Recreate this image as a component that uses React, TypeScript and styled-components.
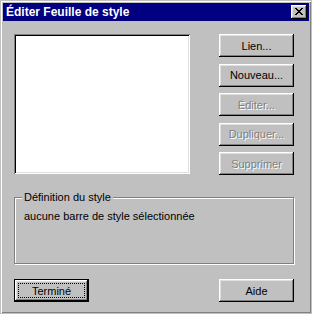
import styled, { createGlobalStyle, css } from 'styled-components';

const GlobalStyle = createGlobalStyle`
    html, body {
        margin: 0;
        padding: 0;
        background: #c0c0c0;
    }
    * {
        box-sizing: border-box;
    }
`

const Window = styled.div`
    width: 312px;
    height: 314px;
    display: flex;
    flex-direction: column;
    background: #c0c0c0;
    border: 1px solid #c0c0c0;
    padding: 2px;
    box-shadow: inset 1px 1px 0 #ffffff, inset -1px -1px 0 #808080;
    font-family: "Liberation Sans", Arial, sans-serif;
    font-size: 11px;
    color: #000;
`

const TitleBar = styled.div`
    height: 18px;
    display: flex;
    align-items: center;
    justify-content: space-between;
    background: #000080;
    padding: 0 2px 0 3px;
`

const Title = styled.span`
    color: #ffffff;
    font-weight: bold;
    font-size: 12px;
    line-height: 18px;
`

const CloseButton = styled.div`
    width: 16px;
    height: 14px;
    display: flex;
    align-items: center;
    justify-content: center;
    padding: 0 1px 1px 0;
    background: #c0c0c0;
    box-shadow: inset -1px -1px 0 #000, inset 1px 1px 0 #fff, inset -2px -2px 0 #808080, inset 2px 2px 0 #dfdfdf;
`

const Body = styled.div`
    flex: 1;
    display: flex;
    flex-direction: column;
    padding: 13px 15px 9px 11px;
`

const TopRow = styled.div`
    display: flex;
    justify-content: space-between;
`

const ListBox = styled.div`
    width: 176px;
    height: 140px;
    background: #ffffff;
    box-shadow: inset 1px 1px 0 #808080, inset -1px -1px 0 #ffffff, inset 2px 2px 0 #000000, inset -2px -2px 0 #dfdfdf;
`

const ButtonColumn = styled.div`
    display: flex;
    flex-direction: column;
    gap: 6.5px;
`

const bevel = css`
    box-shadow: inset -1px -1px 0 #000, inset 1px 1px 0 #fff, inset -2px -2px 0 #808080, inset 2px 2px 0 #dfdfdf;
`

const Button = styled.div<{ $disabled?: boolean; $default?: boolean }>`
    position: relative;
    width: 75px;
    height: 23px;
    display: flex;
    align-items: center;
    justify-content: center;
    background: #c0c0c0;
    font-size: 11px;
    ${bevel}
    color: ${p => (p.$disabled ? '#808080' : '#000')};
    text-shadow: ${p => (p.$disabled ? '1px 1px 0 #ffffff' : 'none')};
    ${p => p.$default && css`
        border: 1px solid #000;
        &::after {
            content: '';
            position: absolute;
            inset: 3px;
            border: 1px dotted #000;
        }
    `}
`

const GroupBox = styled.div`
    position: relative;
    margin-top: 22px;
    height: 67px;
    border: 1px solid #808080;
    box-shadow: inset 1px 1px 0 #fff, 1px 1px 0 #fff;
    padding: 12px 9px 0 9px;
`

const GroupLabel = styled.span`
    position: absolute;
    top: -7px;
    left: 7px;
    padding: 0 2px;
    background: #c0c0c0;
    line-height: 13px;
`

const GroupText = styled.div`
    line-height: 13px;
`

const BottomRow = styled.div`
    display: flex;
    justify-content: space-between;
    margin-top: auto;
`

const CloseGlyph = () => {
    const rows = [
        [0, 1, 6, 7],
        [1, 2, 5, 6],
        [2, 3, 4, 5],
        [3, 4],
        [2, 3, 4, 5],
        [1, 2, 5, 6],
        [0, 1, 6, 7],
    ]
    return (
        <svg width="8" height="7" viewBox="0 0 8 7" shapeRendering="crispEdges">
            {rows.map((cols, y) =>
                cols.map(x => <rect key={`${x}-${y}`} x={x} y={y} width="1" height="1" fill="#000" />)
            )}
        </svg>
    )
}

const sideButtons = [
    { label: 'Lien...', disabled: false },
    { label: 'Nouveau...', disabled: false },
    { label: 'Éditer...', disabled: true },
    { label: 'Dupliquer...', disabled: true },
    { label: 'Supprimer', disabled: true },
]

export default function App() {
    return (
        <>
            <GlobalStyle />
            <Window>
                <TitleBar>
                    <Title>Éditer Feuille de style</Title>
                    <CloseButton>
                        <CloseGlyph />
                    </CloseButton>
                </TitleBar>
                <Body>
                    <TopRow>
                        <ListBox />
                        <ButtonColumn>
                            {sideButtons.map(b => (
                                <Button key={b.label} $disabled={b.disabled}>{b.label}</Button>
                            ))}
                        </ButtonColumn>
                    </TopRow>
                    <GroupBox>
                        <GroupLabel>Définition du style</GroupLabel>
                        <GroupText>aucune barre de style sélectionnée</GroupText>
                    </GroupBox>
                    <BottomRow>
                        <Button $default>Terminé</Button>
                        <Button>Aide</Button>
                    </BottomRow>
                </Body>
            </Window>
        </>
    )
}
